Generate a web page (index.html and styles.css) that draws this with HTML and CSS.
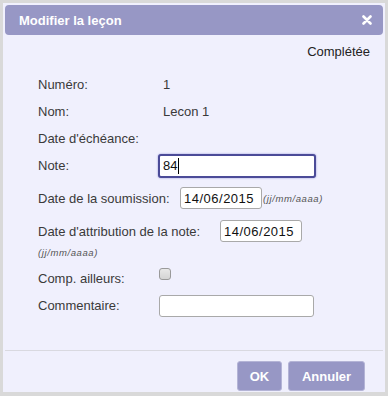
FILE: index.html
```html
<!DOCTYPE html>
<html lang="fr">
<head>
<meta charset="UTF-8">
<title>Modifier la leçon</title>
<link rel="stylesheet" href="styles.css">
</head>
<body>
<div class="dialog">
  <div class="titlebar">
    <span class="title">Modifier la leçon</span>
    <svg class="close" width="10" height="10" viewBox="0 0 10 10">
      <path d="M1.5 1.5 L8.5 8.5 M8.5 1.5 L1.5 8.5" stroke="#fff" stroke-width="2.6" stroke-linecap="round"/>
    </svg>
  </div>

  <div class="status">Complétée</div>

  <form class="lesson">
    <div class="row">
      <span class="label">Numéro:</span>
      <span class="value">1</span>
    </div>
    <div class="row">
      <span class="label">Nom:</span>
      <span class="value">Lecon 1</span>
    </div>
    <div class="row">
      <span class="label">Date d'échéance:</span>
    </div>
    <div class="row">
      <label class="label" for="note">Note:</label>
      <div class="caret-wrap">
        <input type="text" id="note" class="field note" value="84">
        <span class="caret"></span>
      </div>
    </div>
    <div class="row date-row tall">
      <label for="soumission">Date de la soumission:</label>
      <input type="text" id="soumission" class="field date" value="14/06/2015">
      <span class="hint">(jj/mm/aaaa)</span>
    </div>
    <div class="row date-row attrib">
      <label for="attribution">Date d'attribution de la note:</label>
      <input type="text" id="attribution" class="field date" value="14/06/2015">
    </div>
    <div class="hint hint-line">(jj/mm/aaaa)</div>
    <div class="row check-row">
      <label class="label" for="ailleurs">Comp. ailleurs:</label>
      <input type="checkbox" id="ailleurs" class="check">
    </div>
    <div class="row">
      <label class="label" for="commentaire">Commentaire:</label>
      <input type="text" id="commentaire" class="field comment">
    </div>
  </form>

  <div class="footer">
    <button class="btn ok">OK</button>
    <button class="btn cancel">Annuler</button>
  </div>
</div>
</body>
</html>
```

FILE: styles.css
```css
body {
  margin: 0;
  padding: 3px;
  background-color: #d9d9d9;
  font-family: "Liberation Sans", Arial, sans-serif;
  font-size: 13px;
  color: #3a3a3a;
}

.dialog {
  width: 382px;
  height: 389px;
  background-color: #f0f0fd;
  display: flex;
  flex-direction: column;
  box-sizing: border-box;
}

.titlebar {
  margin: 2px 2px 0 2px;
  height: 30px;
  background-color: #9797c5;
  border-radius: 4px;
  display: flex;
  align-items: center;
  justify-content: space-between;
  padding: 0 11px 0 14px;
}

.title {
  color: #fff;
  font-weight: bold;
  font-size: 13px;
}

.close {
  display: block;
}

.status {
  margin-top: 9px;
  height: 16px;
  line-height: 16px;
  text-align: right;
  padding-right: 15px;
  color: #222;
}

.lesson {
  margin: 11px 0 0 0;
  padding-left: 35px;
}

.row {
  display: flex;
  align-items: center;
  height: 27px;
}

.label {
  width: 121px;
  flex-shrink: 0;
}

.value {
  padding-left: 4px;
}

.field {
  box-sizing: border-box;
  height: 22px;
  border: 1px solid #a9a9a9;
  border-radius: 3px;
  background: #fff;
  font-family: "Liberation Sans", Arial, sans-serif;
  font-size: 13px;
  letter-spacing: 0.5px;
  color: #111;
  padding: 0 3px;
  margin: 0;
}

.caret-wrap {
  position: relative;
  margin-left: -1px;
}

.field.note {
  width: 158px;
  height: 24px;
  border: 2px solid #4b4b98;
  box-shadow: 0 0 2px #8a8ad8;
  outline: none;
  padding: 0 3px;
  letter-spacing: 0;
}

.caret {
  position: absolute;
  left: 20px;
  top: 4px;
  width: 1px;
  height: 16px;
  background: #000;
}

.date-row label {
  flex-shrink: 0;
}

.tall {
  height: 36px;
  margin-top: 1px;
}

.tall label {
  width: 142px;
}

.attrib {
  height: 30px;
}

.attrib label {
  width: 182px;
}

.field.date {
  width: 82px;
}

.hint {
  font-style: italic;
  font-size: 9.5px;
  letter-spacing: 0.6px;
  color: #555;
  margin-left: 1px;
}

.hint-line {
  height: 14px;
  line-height: 14px;
  margin-left: 0;
}

.check-row {
  height: 28px;
  margin-top: 4px;
}

.check {
  width: 12px;
  height: 12px;
  margin: 0 0 8px 0;
  appearance: none;
  border: 1px solid #9a9a9a;
  border-radius: 3px;
  background: linear-gradient(#e8e8e8, #d4d4d4);
  box-sizing: border-box;
}

.field.comment {
  width: 155px;
}

.footer {
  margin: auto 2px 0 2px;
  border-top: 1px solid #d9d9e0;
  padding: 10px 18px 1px 0;
  display: flex;
  justify-content: flex-end;
  gap: 6px;
}

.btn {
  height: 30px;
  padding: 0;
  background-color: #9797c5;
  border: 1px solid #b4b4d6;
  border-radius: 3px;
  color: #fff;
  font-family: "Liberation Sans", Arial, sans-serif;
  font-weight: bold;
  font-size: 13px;
  cursor: pointer;
}

.btn.ok {
  width: 45px;
}

.btn.cancel {
  width: 77px;
}
```
